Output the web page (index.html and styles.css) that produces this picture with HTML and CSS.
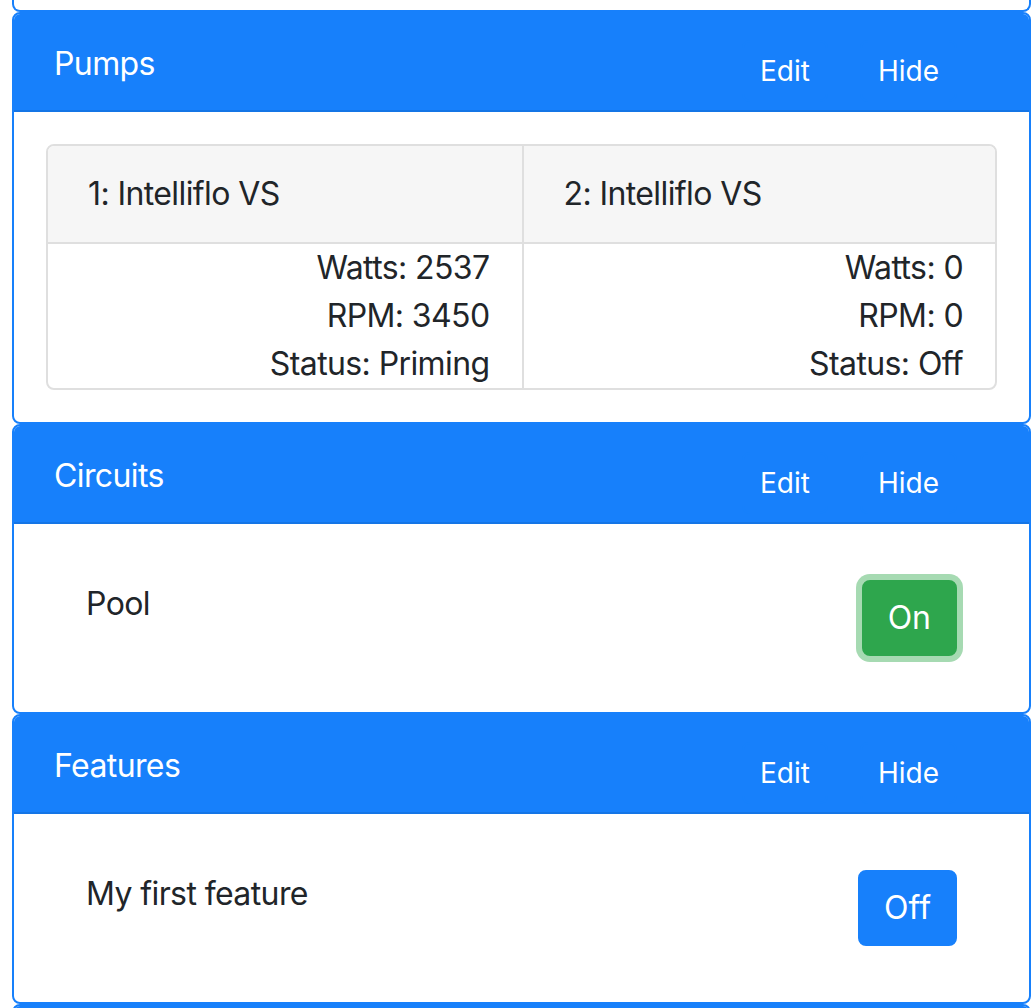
FILE: index.html
```html
<!DOCTYPE html>
<html lang="en">
<head>
<meta charset="UTF-8">
<title>Pool Controller</title>
<link rel="stylesheet" href="styles.css">
</head>
<body>

<div class="page">
  <div class="card card-stub"></div>

  <div class="card">
    <div class="card-header">
      <div class="card-title">Pumps</div>
      <div class="header-actions">
        <button class="btn btn-sm">Edit</button>
        <button class="btn btn-sm">Hide</button>
      </div>
    </div>
    <div class="card-body">
      <table class="pump-table">
        <thead>
          <tr><th>1: Intelliflo VS</th><th>2: Intelliflo VS</th></tr>
        </thead>
        <tbody>
          <tr>
            <td>Watts: 2537<br>RPM: 3450<br>Status: Priming</td>
            <td>Watts: 0<br>RPM: 0<br>Status: Off</td>
          </tr>
        </tbody>
      </table>
    </div>
  </div>

  <div class="card">
    <div class="card-header">
      <div class="card-title">Circuits</div>
      <div class="header-actions">
        <button class="btn btn-sm">Edit</button>
        <button class="btn btn-sm">Hide</button>
      </div>
    </div>
    <div class="card-body">
      <div class="item-row">
        <span>Pool</span>
        <button class="btn btn-toggle btn-on">On</button>
      </div>
    </div>
  </div>

  <div class="card">
    <div class="card-header">
      <div class="card-title">Features</div>
      <div class="header-actions">
        <button class="btn btn-sm">Edit</button>
        <button class="btn btn-sm">Hide</button>
      </div>
    </div>
    <div class="card-body">
      <div class="item-row">
        <span>My first feature</span>
        <button class="btn btn-toggle btn-off">Off</button>
      </div>
    </div>
  </div>

  <div class="card">
    <div class="card-header"></div>
  </div>
</div>

</body>
</html>
```

FILE: styles.css
```css
body {
  margin: 0;
  font-family: Inter, "Liberation Sans", sans-serif;
  font-size: 32px;
  line-height: 48px;
  letter-spacing: -0.6px;
  color: #212529;
  background: #fff;
}
.page {
  padding: 0 5px 0 12px;
}
.card {
  border: 2px solid #1780fb;
  border-radius: 8px;
  background: #fff;
  overflow: hidden;
}
.card-stub {
  height: 10px;
  border-top: none;
  border-radius: 0 0 8px 8px;
}
.card-header {
  display: flex;
  justify-content: space-between;
  align-items: flex-start;
  background: #1780fb;
  color: #fff;
  height: 98px;
  padding: 26px 72px 0 40px;
  box-sizing: border-box;
  border-bottom: 2px solid #1475e6;
}
.card-title {
  font-size: 32px;
  line-height: 48px;
}
.header-actions {
  display: flex;
  gap: 32px;
}
.btn {
  font-family: inherit;
  color: #fff;
  background: #1780fb;
  border: 2px solid #1780fb;
  border-radius: 8px;
  cursor: pointer;
}
.btn-sm {
  font-size: 28px;
  line-height: 42px;
  letter-spacing: 0;
  padding: 8px 16px;
}
.card-body {
  padding: 32px;
}
.pump-table {
  width: 100%;
  border-collapse: separate;
  border-spacing: 0;
  border: 2px solid #dfdfdf;
  border-radius: 8px;
  table-layout: fixed;
}
.pump-table th {
  background: #f6f6f6;
  font-weight: normal;
  text-align: left;
  padding: 24px 40px;
  border-bottom: 2px solid #dfdfdf;
}
.pump-table th:first-child { border-top-left-radius: 6px; }
.pump-table th:last-child { border-top-right-radius: 6px; }
.pump-table th + th,
.pump-table td + td {
  border-left: 2px solid #dfdfdf;
}
.pump-table td {
  text-align: right;
  padding: 0 32px;
}
.item-row {
  display: flex;
  justify-content: space-between;
  align-items: flex-start;
  padding: 24px 40px;
}
.btn-toggle {
  font-size: 32px;
  line-height: 48px;
  padding: 12px 24px;
}
.btn-on {
  background: #2ea64d;
  border-color: #2ea64d;
  box-shadow: 0 0 0 6px #a6dab2;
}
.btn-off {
  background: #1780fb;
}
```
